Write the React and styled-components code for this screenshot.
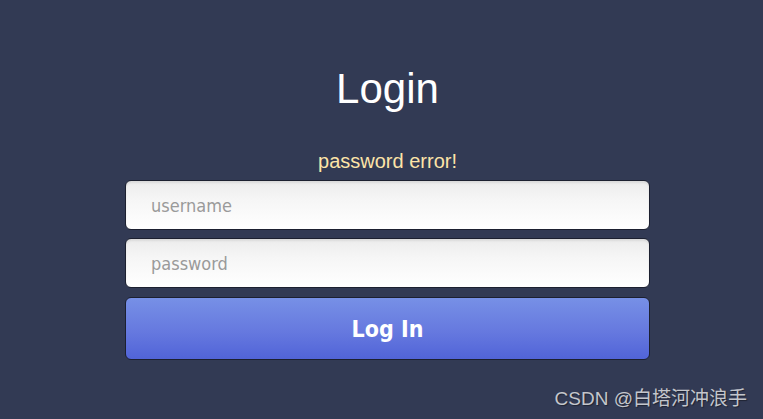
import React from "react";
import styled, { createGlobalStyle } from "styled-components";

const Global = createGlobalStyle`
  html, body { margin: 0; padding: 0; background: #323a54; }
  body { width: 763px; height: 419px; overflow: hidden; }
`;

const Page = styled.div`
  box-sizing: border-box;
  width: 763px;
  height: 419px;
  padding-left: 12px;
  background: #323a54;
  display: flex;
  flex-direction: column;
  align-items: center;
  position: relative;
`;

const Title = styled.h1`
  margin: 64px 0 0;
  font-family: "Liberation Sans", Arial, sans-serif;
  font-weight: 400;
  font-size: 42px;
  line-height: 50px;
  color: #ffffff;
`;

const ErrorText = styled.div`
  margin-top: 36px;
  font-family: "Liberation Sans", Arial, sans-serif;
  font-size: 20px;
  line-height: 22px;
  color: #fde4a8;
`;

const Form = styled.form`
  margin-top: 8px;
  width: 525px;
  display: flex;
  flex-direction: column;
  gap: 8px;
`;

const Input = styled.input`
  box-sizing: border-box;
  width: 100%;
  height: 50px;
  border: 1px solid #1c2030;
  border-radius: 6px;
  padding: 0 25px;
  background: linear-gradient(to bottom, #ececec 0%, #f6f6f6 40%, #ffffff 100%);
  box-shadow: inset 0 2px 2px rgba(0, 0, 0, 0.08);
  font-family: "DejaVu Sans Condensed", "DejaVu Sans", Tahoma, sans-serif;
  font-size: 18px;
  color: #333;
  outline: none;
  &::placeholder { color: #9a9a9a; }
`;

const Button = styled.button`
  box-sizing: border-box;
  width: 100%;
  height: 63px;
  margin-top: 1px;
  border: 1px solid #1c2030;
  border-radius: 6px;
  background: linear-gradient(to bottom, #7790e6 0%, #6679df 55%, #5164d8 100%);
  color: #ffffff;
  font-family: "DejaVu Sans Condensed", "DejaVu Sans", Tahoma, sans-serif;
  font-weight: 700;
  font-size: 23px;
  cursor: pointer;
`;

const Watermark = styled.div`
  position: absolute;
  right: 16px;
  bottom: 9px;
  font-family: "Liberation Sans", Arial, "Noto Sans CJK SC", sans-serif;
  font-size: 19px;
  color: #c4c6cc;
  text-shadow: 1px 1px 1px rgba(0, 0, 0, 0.4);
`;

export default function App() {
  return (
    <Page>
      <Global />
      <Title>Login</Title>
      <ErrorText>password error!</ErrorText>
      <Form onSubmit={(e) => e.preventDefault()}>
        <Input type="text" placeholder="username" />
        <Input type="password" placeholder="password" />
        <Button type="submit">Log In</Button>
      </Form>
      <Watermark>CSDN @白塔河冲浪手</Watermark>
    </Page>
  );
}
